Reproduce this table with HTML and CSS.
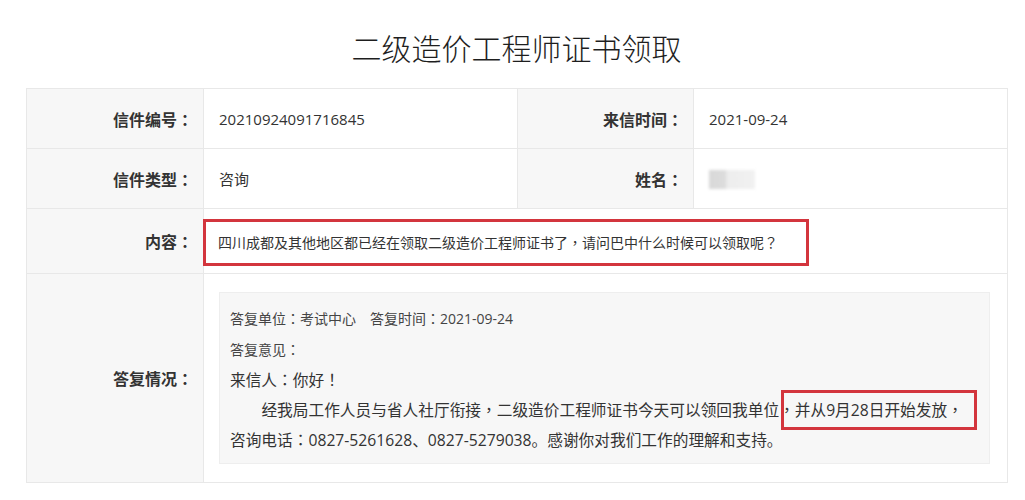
FILE: index.html
```html
<!DOCTYPE html>
<html lang="zh-CN">
<head>
<meta charset="utf-8">
<title>二级造价工程师证书领取</title>
<link rel="stylesheet" href="styles.css">
</head>
<body>
<div class="page">
  <h1 class="title">二级造价工程师证书领取</h1>
  <table class="info">
    <colgroup>
      <col class="c-label"><col class="c-value"><col class="c-label2"><col class="c-value">
    </colgroup>
    <tr class="row-std">
      <th>信件编号<span class="p" lang="zh-TW">：</span></th>
      <td class="val num">20210924091716845</td>
      <th>来信时间<span class="p" lang="zh-TW">：</span></th>
      <td class="val num">2021-09-24</td>
    </tr>
    <tr class="row-std">
      <th>信件类型<span class="p" lang="zh-TW">：</span></th>
      <td class="val">咨询</td>
      <th>姓名<span class="p" lang="zh-TW">：</span></th>
      <td class="val"><span class="blurred"></span></td>
    </tr>
    <tr class="row-content">
      <th>内容<span class="p" lang="zh-TW">：</span></th>
      <td class="content-cell" colspan="3"><span class="mark-box">四川成都及其他地区都已经在领取二级造价工程师证书了<span class="p" lang="zh-TW">，</span>请问巴中什么时候可以领取呢<span class="p" lang="zh-TW">？</span></span></td>
    </tr>
    <tr class="row-reply">
      <th>答复情况<span class="p" lang="zh-TW">：</span></th>
      <td class="reply-cell" colspan="3">
        <div class="reply">
          <p class="small">答复单位<span class="p" lang="zh-TW">：</span>考试中心<span class="gap"></span>答复时间<span class="p" lang="zh-TW">：</span>2021-09-24</p>
          <p class="small">答复意见<span class="p" lang="zh-TW">：</span></p>
          <p class="big">来信人<span class="p" lang="zh-TW">：</span>你好<span class="p" lang="zh-TW">！</span></p>
          <p class="big indent">经我局工作人员与省人社厅衔接<span class="p" lang="zh-TW">，</span>二级造价工程师证书今天可以领回我单位<span class="p" lang="zh-TW">，</span><span class="mark-inline">并从9月28日开始发放<span class="p" lang="zh-TW">，</span></span></p>
          <p class="big">咨询电话<span class="p" lang="zh-TW">：</span>0827-5261628、0827-5279038。感谢你对我们工作的理解和支持。</p>
        </div>
      </td>
    </tr>
  </table>
</div>
</body>
</html>
```

FILE: styles.css
```css
html, body {
  margin: 0;
  padding: 0;
  background: #ffffff;
}

body {
  font-family: "Open Sans", "Noto Sans CJK SC", sans-serif;
  color: #333333;
}

.p {
  font-family: "Noto Sans CJK TC", "Noto Sans CJK SC", sans-serif;
}

.page {
  width: 981px;
  margin-left: 26px;
}

.title {
  margin: 0;
  padding-top: 27px;
  height: 61px;
  line-height: 40px;
  font-size: 30px;
  font-weight: 300;
  color: #1e1e1e;
  text-align: center;
  font-family: "Noto Sans CJK SC", sans-serif;
}

.info {
  width: 981px;
  border-collapse: collapse;
  table-layout: fixed;
  border: 1px solid #e6e6e6;
}

.c-label { width: 177px; }
.c-label2 { width: 176px; }
.c-value { width: 314px; }

.info th,
.info td {
  border: 1px solid #e8e8e8;
  box-sizing: border-box;
}

.info th {
  background: #f7f7f7;
  text-align: right;
  padding: 0 10px 0 0;
  font-size: 16px;
  font-weight: bold;
  color: #333333;
  font-family: "Noto Sans CJK SC", sans-serif;
}

.row-std th,
.row-std td {
  height: 60px;
}

.val {
  padding: 0 15px;
  font-size: 15px;
  color: #333333;
}

.blurred {
  display: inline-block;
  width: 46px;
  height: 19px;
  vertical-align: middle;
  background: linear-gradient(90deg, #d8d8d8 0, #dcdcdc 35%, #ededed 40%, #f1f1f1 100%);
  filter: blur(1.5px);
}

.row-content th,
.row-content td {
  height: 65px;
}

.content-cell {
  padding: 0;
  background: #ffffff;
}

.mark-box {
  display: inline-block;
  box-sizing: border-box;
  height: 47px;
  margin: 2px 0 0 -1px;
  padding: 0 28px 0 12px;
  border: 3px solid #d3353d;
  line-height: 41px;
  font-size: 14px;
  color: #333333;
  vertical-align: middle;
}

.row-reply th,
.row-reply td {
  height: 209px;
}

.reply-cell {
  padding: 18px 17px 17px 15px;
  vertical-align: top;
}

.reply {
  background: #f7f7f7;
  border: 1px solid #eeeeee;
  padding: 10px;
  height: 172px;
  box-sizing: border-box;
}

.reply p {
  margin: 0;
  line-height: 30px;
  color: #333333;
}

.reply .small {
  font-size: 14px;
  color: #444444;
}

.reply .big {
  font-size: 15.7px;
}

.reply .indent {
  text-indent: 2em;
}

.gap {
  display: inline-block;
  width: 14px;
}

.mark-inline {
  border: 3px solid #d3353d;
  padding: 6px 11px 6px 11px;
  margin: 0 -14px 0 -14px;
}
```
